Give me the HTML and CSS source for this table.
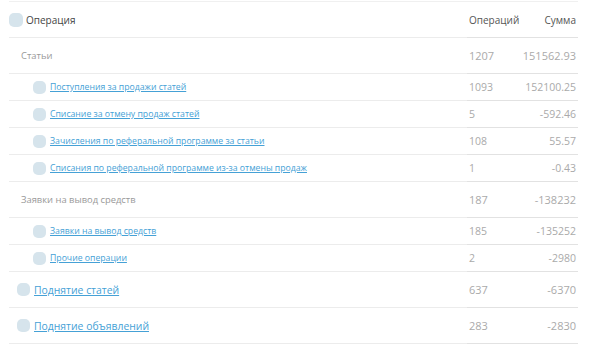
FILE: index.html
```html
<!DOCTYPE html>
<html lang="ru">
<head>
<meta charset="utf-8">
<link rel="stylesheet" href="styles.css">
</head>
<body>
<div class="wrap">
<table class="ops">
  <colgroup><col class="c-name"><col class="c-cnt"><col class="c-sum"></colgroup>
  <thead>
    <tr class="head">
      <th class="name"><span class="cell"><span class="chk big"></span>Операция</span></th>
      <th class="cnt">Операций</th>
      <th class="sum">Сумма</th>
    </tr>
  </thead>
  <tbody>
    <tr class="group">
      <td class="name">Статьи</td><td class="cnt">1207</td><td class="sum">151562.93</td>
    </tr>
    <tr class="sub">
      <td class="name"><span class="cell"><span class="chk"></span><a href="#">Поступления за продажи статей</a></span></td><td class="cnt">1093</td><td class="sum">152100.25</td>
    </tr>
    <tr class="sub">
      <td class="name"><span class="cell"><span class="chk"></span><a href="#">Списание за отмену продаж статей</a></span></td><td class="cnt">5</td><td class="sum">-592.46</td>
    </tr>
    <tr class="sub">
      <td class="name"><span class="cell"><span class="chk"></span><a href="#">Зачисления по реферальной программе за статьи</a></span></td><td class="cnt">108</td><td class="sum">55.57</td>
    </tr>
    <tr class="sub">
      <td class="name"><span class="cell"><span class="chk"></span><a href="#">Списания по реферальной программе из-за отмены продаж</a></span></td><td class="cnt">1</td><td class="sum">-0.43</td>
    </tr>
    <tr class="group">
      <td class="name">Заявки на вывод средств</td><td class="cnt">187</td><td class="sum">-138232</td>
    </tr>
    <tr class="sub">
      <td class="name"><span class="cell"><span class="chk"></span><a href="#">Заявки на вывод средств</a></span></td><td class="cnt">185</td><td class="sum">-135252</td>
    </tr>
    <tr class="sub">
      <td class="name"><span class="cell"><span class="chk"></span><a href="#">Прочие операции</a></span></td><td class="cnt">2</td><td class="sum">-2980</td>
    </tr>
    <tr class="top">
      <td class="name"><span class="cell"><span class="chk"></span><a href="#">Поднятие статей</a></span></td><td class="cnt">637</td><td class="sum">-6370</td>
    </tr>
    <tr class="top">
      <td class="name"><span class="cell"><span class="chk"></span><a href="#">Поднятие объявлений</a></span></td><td class="cnt">283</td><td class="sum">-2830</td>
    </tr>
  </tbody>
</table>
</div>
</body>
</html>
```

FILE: styles.css
```css
html, body {
  margin: 0;
  padding: 0;
  background: #fff;
}
body {
  font-family: "Open Sans", "Liberation Sans", sans-serif;
  color: #444;
}
.wrap {
  padding: 1px 0 0 9px;
}
.ops {
  width: 569px;
  border-collapse: collapse;
  border-top: 1px solid #f0f0f0;
  table-layout: fixed;
}
.c-name { width: 458px; }
.c-cnt { width: 52px; }
.ops th, .ops td {
  padding: 0;
  border-bottom: 1px solid #ececec;
  vertical-align: middle;
  font-weight: normal;
  text-align: left;
  white-space: nowrap;
}
.ops td.cnt, .ops td.sum, .ops th.cnt, .ops th.sum {
  border-bottom-color: #e2e2e2;
}
.cnt { padding-left: 2px !important; }
.sum { text-align: right !important; padding-right: 2px !important; }
.head { height: 36px; }
.head th {
  font-size: 10px;
  color: #444;
  font-weight: 500;
}
.head .cnt, .head .sum { color: #555; }
.cell {
  display: flex;
  align-items: center;
}
.chk {
  display: inline-block;
  width: 13px;
  height: 13px;
  border-radius: 5px;
  background: #d6e4ec;
  margin-right: 4px;
  flex: none;
}
.chk.big {
  width: 14px;
  height: 14px;
  margin-right: 3px;
}
.group { height: 36px; }
.group td {
  font-size: 9.4px;
  color: #999;
}
.group td.name { padding-left: 12px; }
.sub { height: 27px; }
.sub td {
  font-size: 10px;
  color: #aaa;
}
.sub .name .cell { padding-left: 24px; }
.sub a {
  color: #45a1d6;
  text-decoration: underline;
  font-size: 8.7px;
}
.group .cnt, .group .sum, .top .cnt, .top .sum { font-size: 11px; color: #aaa; }
.sub .cnt, .sub .sum { font-size: 10.5px; }
.top { height: 36px; }
.top .name .cell { padding-left: 8px; }
.top a {
  color: #45a1d6;
  text-decoration: underline;
  font-size: 10.4px;
}
```
